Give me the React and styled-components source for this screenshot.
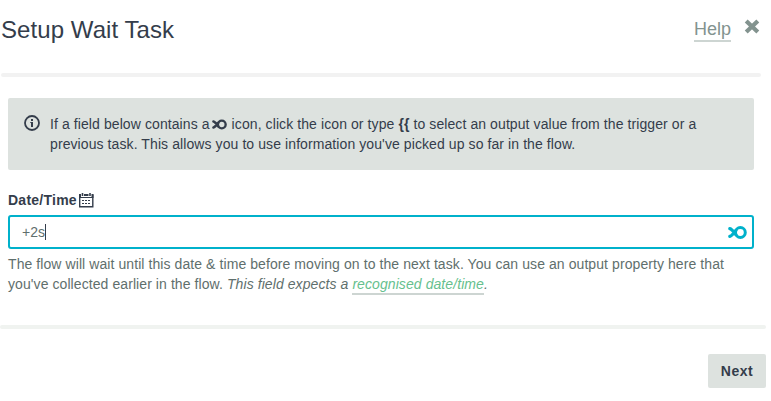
import React, { useState } from "react";
import styled, { createGlobalStyle } from "styled-components";

const GlobalStyle = createGlobalStyle`
  * {
    box-sizing: border-box;
  }
  body {
    margin: 0;
    background-color: #ffffff;
    color: #343d4b;
    font-family: "Liberation Sans", Arial, sans-serif;
    font-size: 14px;
    line-height: 20px;
    overflow: hidden;
  }
`;

const Dialog = styled.div`
  display: flex;
  flex-direction: column;
  width: 771px;
  height: 401px;
`;

const Header = styled.div`
  display: flex;
  justify-content: space-between;
  align-items: flex-start;
  height: 73px;
  padding: 15px 11px 0 1px;
`;

const Title = styled.h1`
  margin: 0;
  font-size: 24px;
  font-weight: normal;
  letter-spacing: 0.07px;
  line-height: 30px;
`;

const HeaderActions = styled.div`
  display: flex;
  align-items: flex-start;
  gap: 13px;
`;

const HelpLink = styled.a`
  height: 27px;
  border-bottom: 2px solid #cdd5d2;
  color: #83938f;
  font-size: 18px;
  line-height: 28px;
`;

const CloseButton = styled.button`
  display: flex;
  margin: 4px 0 0;
  padding: 0;
  border: none;
  background: none;
`;

const Divider = styled.div`
  flex: none;
  width: ${(props) => props.$width}px;
  height: 4px;
  margin-left: ${(props) => props.$left || 0}px;
  border-radius: 2px;
  background-color: ${(props) => props.$color};
`;

const Content = styled.div`
  height: 248px;
  padding: 21px 17px 0 8px;
`;

const InfoBox = styled.div`
  display: flex;
  height: 72px;
  padding: 16px;
  border-radius: 2px;
  background-color: #dde2df;
`;

const InfoText = styled.p`
  margin: 0 0 0 10px;
  letter-spacing: 0.09px;
  white-space: nowrap;
`;

const Label = styled.label`
  display: flex;
  align-items: center;
  height: 20px;
  margin-top: 20px;
  font-weight: bold;
  letter-spacing: 0.25px;
  gap: 2px;
`;

const InputWrapper = styled.div`
  display: flex;
  align-items: center;
  height: 34px;
  margin-top: 5px;
  padding: 0 5px 0 12px;
  border: 2px solid #00b1cb;
  border-radius: 3px;
`;

const InputValue = styled.div`
  display: flex;
  flex: 1;
  align-items: center;
  color: #5f6f6d;
`;

const Caret = styled.span`
  width: 1px;
  height: 16px;
  background-color: #343d4b;
`;

const HelpText = styled.p`
  margin: 5px 0 0;
  color: #5f6f6d;
  letter-spacing: 0.08px;
  white-space: nowrap;
`;

const FormatLink = styled.a`
  padding-bottom: 1px;
  border-bottom: 2px solid #cdd5d2;
  color: #66bf8e;
`;

const Footer = styled.div`
  display: flex;
  justify-content: flex-end;
  padding: 25px 5px 0 0;
`;

const NextButton = styled.button`
  width: 58px;
  height: 34px;
  padding: 0;
  border: none;
  border-radius: 2px;
  background-color: #dde2df;
  color: #343d4b;
  font: bold 14px "Liberation Sans", Arial, sans-serif;
  letter-spacing: 0.5px;
`;

const InlineFish = styled.svg`
  margin: 0 1px 0 -2px;
  vertical-align: -1px;
`;

const StyledInfoIcon = styled.svg`
  flex: none;
  margin-top: 1px;
`;

const FishShape = () => (
  <g fill="none" stroke="currentColor">
    <ellipse cx="12.4" cy="6.5" rx="4.9" ry="4.9" strokeWidth="3" />
    <path
      d="M1.8 2.6 C3.8 3 5 4.6 7.8 8.6 M1.8 10.4 C3.8 10 5 8.4 7.8 4.4"
      strokeWidth="3.2"
      strokeLinecap="round"
    />
  </g>
);

const InfoIcon = () => (
  <StyledInfoIcon width="16" height="16" viewBox="0 0 16 16">
    <circle cx="8" cy="8" r="7" fill="none" stroke="#343d4b" strokeWidth="1.8" />
    <path d="M7 4h2v2H7z M6.3 7H9v5H7V8h-.7z" fill="#343d4b" />
  </StyledInfoIcon>
);

const CalendarIcon = () => (
  <svg width="15" height="15" viewBox="0 0 15 15">
    <path
      d="M0.7 1.5V13.8H13.8V1.5"
      fill="none"
      stroke="#343d4b"
      strokeWidth="1.4"
    />
    <path
      d="M0 1h2v3H0z M12.5 1h2v3h-2z M5 1h4.5v2H5z M0 4h14.5v1H0z"
      fill="#343d4b"
    />
    <path d="M2.7 0h1.6v3H2.7z M10.2 0h1.6v3h-1.6z" fill="#343d4b" />
    <path
      d="M3 7h2v1H3z M6 7h2v1H6z M9 7h2v1H9z M3 10h2v1H3z M6 10h2v1H6z M9 10h2v1H9z"
      fill="#343d4b"
    />
  </svg>
);

const CloseIcon = () => (
  <svg width="16" height="16" viewBox="0 0 16 16">
    <path
      d="M2.2 2 L13.8 13 M13.8 2 L2.2 13"
      stroke="#83938f"
      strokeWidth="4.2"
    />
  </svg>
);

const App = () => {
  const [value] = useState("+2s");

  return (
    <Dialog>
      <GlobalStyle />
      <Header>
        <Title>Setup Wait Task</Title>
        <HeaderActions>
          <HelpLink>Help</HelpLink>
          <CloseButton aria-label="Close">
            <CloseIcon />
          </CloseButton>
        </HeaderActions>
      </Header>
      <Divider $width={760} $left={1} $color="#f2f2f2" />
      <Content>
        <InfoBox>
          <InfoIcon />
          <InfoText>
            If a field below contains a{" "}
            <InlineFish width="15" height="11" viewBox="0 0 19 13">
              <FishShape />
            </InlineFish>{" "}
            icon, click the icon or type <b>{"{{"}</b> to select an output value
            from the trigger or a<br />
            previous task. This allows you to use information you've picked up
            so far in the flow.
          </InfoText>
        </InfoBox>
        <Label>
          Date/Time
          <CalendarIcon />
        </Label>
        <InputWrapper>
          <InputValue>
            {value}
            <Caret />
          </InputValue>
          <svg width="19" height="13" viewBox="0 0 19 13" color="#00b1cb">
            <FishShape />
          </svg>
        </InputWrapper>
        <HelpText>
          The flow will wait until this date &amp; time before moving on to the
          next task. You can use an output property here that
          <br />
          you've collected earlier in the flow.{" "}
          <i>
            This field expects a <FormatLink>recognised date/time</FormatLink>.
          </i>
        </HelpText>
      </Content>
      <Divider $width={766} $color="#f0f3f0" />
      <Footer>
        <NextButton>Next</NextButton>
      </Footer>
    </Dialog>
  );
};

export default App;
